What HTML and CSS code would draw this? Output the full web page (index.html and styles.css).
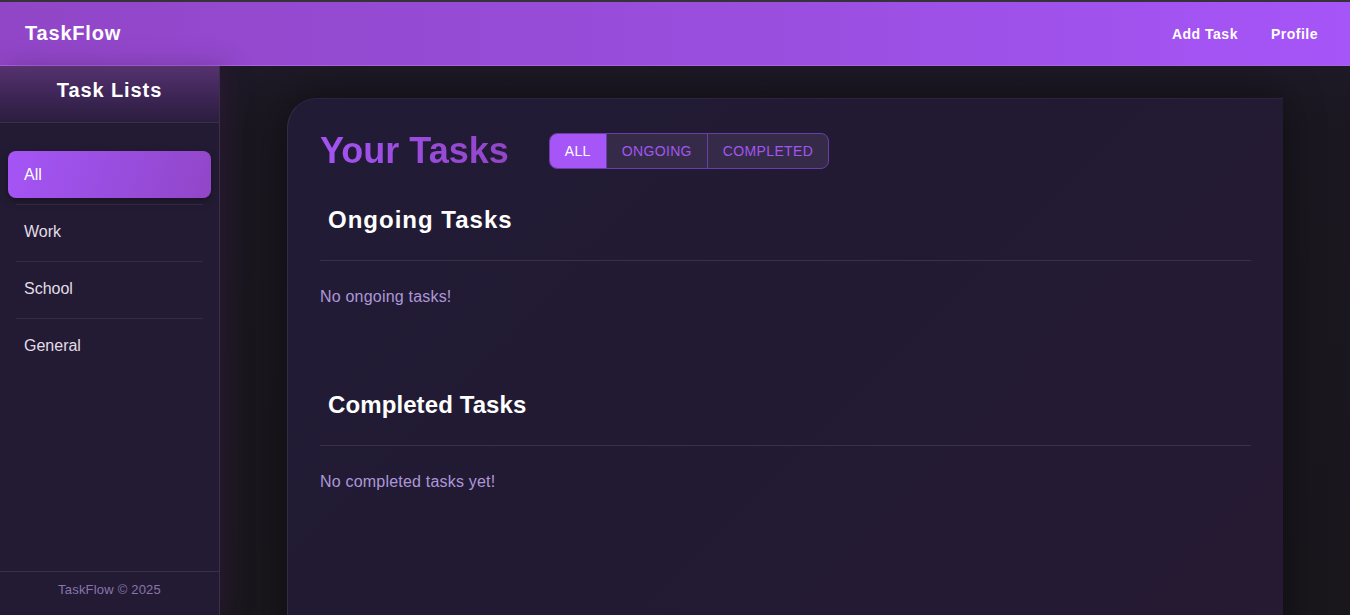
FILE: index.html
```html
<!DOCTYPE html>
<html lang="en">
<head>
<meta charset="utf-8">
<title>TaskFlow</title>
<link rel="stylesheet" href="styles.css">
</head>
<body>
<header class="topbar">
  <div class="brand">TaskFlow</div>
  <nav class="topnav">
    <a href="#" class="topnav-link">Add Task</a>
    <a href="#" class="topnav-link">Profile</a>
  </nav>
</header>
<div class="layout">
  <aside class="sidebar">
    <div class="sidebar-head">Task Lists</div>
    <ul class="lists">
      <li class="list-item"><a href="#" class="list-link active">All</a></li>
      <li class="list-item"><a href="#" class="list-link">Work</a></li>
      <li class="list-item"><a href="#" class="list-link">School</a></li>
      <li class="list-item last"><a href="#" class="list-link">General</a></li>
    </ul>
    <footer class="sidebar-foot">TaskFlow © 2025</footer>
  </aside>
  <main class="main">
    <section class="card">
      <div class="card-head">
        <h1 class="title">Your Tasks</h1>
        <div class="filters">
          <button class="filter active">ALL</button>
          <button class="filter">ONGOING</button>
          <button class="filter">COMPLETED</button>
        </div>
      </div>
      <div class="group">
        <h2 class="group-title spaced">Ongoing Tasks</h2>
        <p class="empty">No ongoing tasks!</p>
      </div>
      <div class="group">
        <h2 class="group-title">Completed Tasks</h2>
        <p class="empty">No completed tasks yet!</p>
      </div>
    </section>
  </main>
</div>
</body>
</html>
```
FILE: styles.css
```css
* { box-sizing: border-box; }
html, body { height: 100%; }
body {
  margin: 0;
  font-family: "Liberation Sans", Arial, sans-serif;
  background: #1a1720;
  color: #e6e0ee;
  overflow: hidden;
}
.topbar {
  height: 66px;
  border-top: 2px solid #35323a;
  border-bottom: 1px solid #a964e6;
  background: linear-gradient(90deg, #9146c7 0%, #9a4fe0 60%, #a655f8 100%);
  display: flex;
  align-items: center;
  justify-content: space-between;
  padding: 0 32px 0 25px;
}
.brand {
  font-size: 20px;
  font-weight: bold;
  color: #fff;
  letter-spacing: 0.8px;
}
.topnav { display: flex; gap: 33px; }
.topnav-link {
  color: #fff;
  text-decoration: none;
  font-weight: bold;
  font-size: 14px;
  letter-spacing: 0.5px;
}
.layout {
  display: flex;
  height: calc(100% - 66px);
}
.sidebar {
  width: 220px;
  flex: none;
  background: #231b33;
  border-right: 1px solid #3a3049;
  display: flex;
  flex-direction: column;
  box-shadow: 6px 0 24px rgba(70, 30, 80, 0.35);
  position: relative;
  z-index: 1;
}
.sidebar-head {
  height: 57px;
  border-bottom: 1px solid #3a3049;
  background: linear-gradient(180deg, #56326f 0%, #3f2658 50%, #2b1e3e 100%);
  display: flex;
  align-items: center;
  justify-content: center;
  font-size: 20px;
  font-weight: bold;
  color: #fff;
  letter-spacing: 0.9px;
  padding-bottom: 8px;
}
.lists {
  list-style: none;
  margin: 0;
  padding: 28px 16px 0;
}
.list-item {
  border-bottom: 1px solid #342a45;
  padding-bottom: 6px;
  margin-bottom: 3px;
}
.list-item.last { border-bottom: none; }
.list-link {
  display: flex;
  align-items: center;
  height: 47px;
  margin: 0 -8px;
  padding: 0 16px;
  color: #e2dde8;
  text-decoration: none;
  font-size: 16px;
  border-radius: 8px;
}
.list-link.active {
  background: linear-gradient(110deg, #a555f6 0%, #9a4ee0 50%, #9146c8 100%);
  color: #fff;
  box-shadow: 0 3px 8px rgba(0, 0, 0, 0.3);
}
.sidebar-foot {
  margin-top: auto;
  height: 44px;
  border-top: 1px solid #3a3049;
  display: flex;
  justify-content: center;
  padding-top: 10px;
  font-size: 13px;
  line-height: 15px;
  letter-spacing: 0.2px;
  color: #8a74ad;
}
.main {
  flex: 1;
  padding: 32px 0 0;
  background: linear-gradient(180deg, #1d1926 0%, #1a1720 12%, #19171c 100%);
  overflow: hidden;
}
.card {
  max-width: 996px;
  margin: 0 auto;
  min-height: 600px;
  background: linear-gradient(135deg, #221b35 0%, #221a33 50%, #271a33 100%);
  border-radius: 30px 0 0 0;
  border-left: 1px solid #352b47;
  border-top: 1px solid #2b2340;
  box-shadow: 0 0 40px rgba(0, 0, 0, 0.45);
  padding: 32px 32px 0;
}
.card-head {
  display: flex;
  align-items: center;
  height: 40px;
  margin-bottom: 35px;
}
.title {
  margin: 0;
  font-size: 36px;
  font-weight: bold;
  background: linear-gradient(90deg, #a353f2, #9146c8);
  -webkit-background-clip: text;
  background-clip: text;
  color: transparent;
}
.filters {
  display: flex;
  margin-left: 40px;
  height: 36px;
  border: 1px solid #6a3ea8;
  border-radius: 8px;
  overflow: hidden;
  background: #352a48;
}
.filter {
  font-family: "Liberation Sans", Arial, sans-serif;
  font-size: 14px;
  letter-spacing: 0.35px;
  border: none;
  border-left: 1px solid #6a3ea8;
  background: transparent;
  color: #a356f0;
  padding: 0 15px;
  margin: 0;
}
.filter:first-child { border-left: none; }
.filter.active {
  background: #a655f7;
  color: #fff;
}
.group { margin-bottom: 85px; }
.group-title {
  margin: 0;
  padding: 0 0 26px 8px;
  font-size: 24px;
  line-height: 28px;
  font-weight: bold;
  letter-spacing: 0.1px;
  color: #fff;
  border-bottom: 1px solid #3a3049;
}
.group-title.spaced { letter-spacing: 1px; }
.empty {
  margin: 27px 0 0;
  font-size: 16px;
  line-height: 18px;
  letter-spacing: 0.2px;
  color: #ac98d8;
}
```
